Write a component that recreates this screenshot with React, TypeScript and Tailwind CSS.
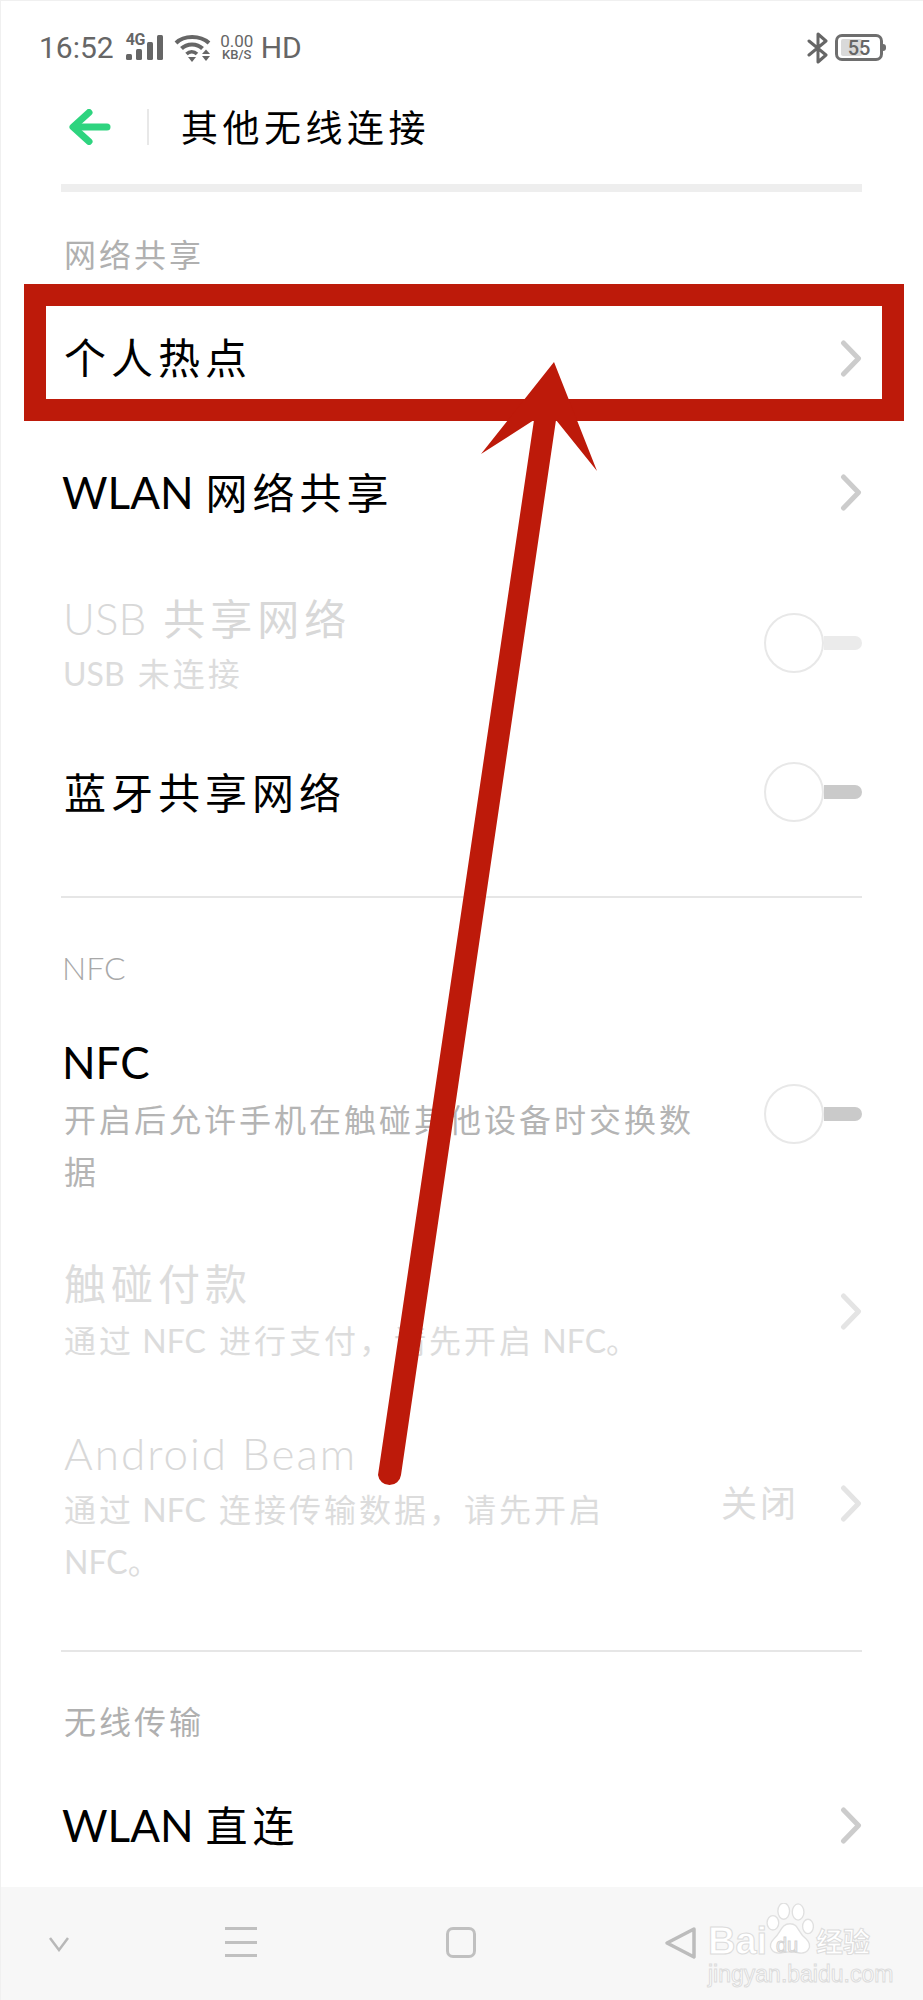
import React from "react";

const FONT = "font-['Lato','Noto_Sans_CJK_SC',sans-serif]";

function Chevron({ color = "#cccccc" }: { color?: string }) {
  return (
    <svg width="22" height="37" viewBox="0 0 22 37" fill="none" className="shrink-0">
      <polyline points="3.5,3 18.5,18.5 3.5,34" stroke={color} strokeWidth="5" strokeLinecap="round" strokeLinejoin="round" />
    </svg>
  );
}

function Toggle({ track }: { track: string }) {
  return (
    <div className="flex items-center shrink-0 mb-[3px]">
      <div className="w-[60px] h-[60px] rounded-full border-2 border-[#e8e8e8] bg-white" />
      <div className={`w-[38px] h-[14px] rounded-r-full ${track}`} />
    </div>
  );
}

function Divider() {
  return <div className="h-[2px] bg-[#e6e6e6]" />;
}

function Cjk({ children, className = "" }: { children: React.ReactNode; className?: string }) {
  return <span className={`font-normal tracking-[5px] ${className}`}>{children}</span>;
}

function Sub({ children, color = "text-[#b4b4b4]" }: { children: React.ReactNode; color?: string }) {
  return <div className={`text-[32px] leading-[52px] tracking-[3px] ${color}`}>{children}</div>;
}

function Lat({ children, gap = false }: { children: React.ReactNode; gap?: boolean }) {
  return <span className={gap ? "tracking-normal mr-[5px]" : "tracking-normal"}>{children}</span>;
}

export default function App() {
  return (
    <div className={`relative w-[923px] h-[2000px] bg-white overflow-hidden flex flex-col border-l border-t border-[#f0f0f0] ${FONT}`}>
      {/* status bar */}
      <div className="h-[91px] flex items-center justify-between pl-[38px] pr-[40px] pt-[2px] text-[#666666] font-['Roboto',sans-serif] shrink-0">
        <div className="flex items-center">
          <span className="text-[30px] leading-none">16:52</span>
          <div className="relative w-[38px] h-[26px] ml-[12px]">
            <span className="absolute left-0 top-[-3px] text-[16px] font-bold leading-[16px] tracking-[-0.5px]">4G</span>
            <svg width="38" height="26" viewBox="0 0 38 26" className="absolute left-0 top-0">
              <rect x="0" y="19" width="6" height="6" rx="1.5" fill="#666" />
              <rect x="10" y="14" width="6" height="11" rx="1.5" fill="#666" />
              <rect x="21" y="7" width="6" height="18" rx="1.5" fill="#666" />
              <rect x="31" y="0" width="6" height="25" rx="1.5" fill="#666" />
            </svg>
          </div>
          <svg width="37" height="28" viewBox="0 0 37 28" fill="none" className="ml-[10px]">
            <path d="M2 9 C10 1 26 1 35 9" stroke="#666" strokeWidth="4" />
            <path d="M7.5 14.5 C13 9 23 9 28.5 14.5" stroke="#666" strokeWidth="4" />
            <path d="M12.5 20 C15.5 17 20 17 23 20" stroke="#666" strokeWidth="3.5" />
            <path d="M14 23 L22 23 L18 28 Z" fill="#666" />
            <path d="M28 20 L32 15.5 L36 20 Z" fill="#666" />
            <path d="M28 22 L36 22 L32 27 Z" fill="#666" />
          </svg>
          <div className="flex flex-col items-center ml-[8px] w-[36px]">
            <span className="text-[17px] leading-[14px]">0.00</span>
            <span className="text-[13px] leading-[13px] font-medium">KB/S</span>
          </div>
          <span className="text-[30px] leading-none ml-[6px]">HD</span>
        </div>
        <div className="flex items-center">
          <svg width="22" height="34" viewBox="0 0 22 34" fill="none">
            <path d="M2 10 L19 24 L11 31 V3 L19 10 L2 24" stroke="#666" strokeWidth="3" strokeLinejoin="round" strokeLinecap="round" />
          </svg>
          <div className="relative ml-[6px] w-[48px] h-[27px] rounded-[7px] border-[3px] border-[#6e6e6e]">
            <div className="absolute left-[3px] top-[2px] w-[21px] h-[17px] rounded-[2px] bg-[#d9d9d9]" />
            <span className="absolute inset-0 flex items-center justify-center text-[20px] font-medium leading-none">55</span>
            <div className="absolute right-[-6px] top-[7px] w-[3px] h-[7px] rounded-r-full bg-[#6e6e6e]" />
          </div>
        </div>
      </div>

      {/* title bar */}
      <div className="h-[70px] flex items-center pl-[68px] shrink-0">
        <svg width="42" height="36" viewBox="0 0 42 36" fill="none">
          <path d="M20 3.5 L4 18 L20 32.5" stroke="#2ed47f" strokeWidth="7" strokeLinecap="round" strokeLinejoin="round" />
          <path d="M6 18 H38" stroke="#2ed47f" strokeWidth="7" strokeLinecap="round" />
        </svg>
        <div className="w-[2px] h-[36px] bg-[#e8e8e8] ml-[36px]" />
        <span className="ml-[32px] text-[37px] leading-none tracking-[4.5px] text-black">其他无线连接</span>
      </div>

      {/* settings list */}
      <div className="flex-1 pl-[60px] pr-[61px] flex flex-col">
        <div className="h-[8px] bg-[#eeeeee] mt-[22px]" />

        <div className="h-[99px] pt-[26px] flex items-center text-[32px] tracking-[3px] text-[#b0b0b0] pl-[3px]">网络共享</div>

        <div className="h-[134px] flex items-center justify-between">
          <div className="text-[42px] leading-[58px] text-black pl-[3px]"><Cjk className="tracking-[5.5px]">个人热点</Cjk></div>
          <Chevron />
        </div>
        <div className="h-[134px] flex items-center justify-between">
          <div className="text-[44px] leading-[58px] text-black pl-[1px]">
            WLAN<Cjk className="ml-[12px] text-[42px]">网络共享</Cjk>
          </div>
          <Chevron />
        </div>

        <div className="h-[170px] flex items-center justify-between">
          <div className="pl-[2px]">
            <div className="text-[44px] leading-[58px] font-light text-[#d8d8d8]">
              USB<Cjk className="ml-[17px] text-[42px]">共享网络</Cjk>
            </div>
            <Sub color="text-[#dcdcdc]"><Lat gap>USB </Lat>未连接</Sub>
          </div>
          <Toggle track="bg-[#ebebeb]" />
        </div>
        <div className="h-[128px] flex items-center justify-between">
          <div className="text-[42px] leading-[58px] text-black pl-[3px]"><Cjk>蓝牙共享网络</Cjk></div>
          <Toggle track="bg-[#cacaca]" />
        </div>

        <div className="mt-[39px]"><Divider /></div>

        <div className="h-[112px] pt-[28px] flex items-center text-[32px] font-light text-[#a8a8a8] pl-[1px]">NFC</div>

        <div className="h-[210px] flex items-center justify-between">
          <div className="w-[650px] pl-[3px]">
            <div className="text-[44px] leading-[58px] text-black -ml-[2px]">NFC</div>
            <div className="mt-[3px]"><Sub>开启后允许手机在触碰其他设备时交换数据</Sub></div>
          </div>
          <Toggle track="bg-[#cacaca]" />
        </div>
        <div className="h-[182px] flex items-center justify-between">
          <div className="pl-[3px]">
            <div className="text-[42px] leading-[58px] text-[#dcdcdc]"><Cjk>触碰付款</Cjk></div>
            <div className="mt-[2px]"><Sub color="text-[#dcdcdc]">通过<Lat gap> NFC </Lat>进行支付，请先开启<Lat> NFC</Lat>。</Sub></div>
          </div>
          <Chevron color="#e4e4e4" />
        </div>
        <div className="h-[208px] flex items-center justify-between">
          <div className="w-[560px] pl-[3px]">
            <div className="text-[44px] leading-[58px] font-light tracking-[2px] text-[#d8d8d8]">Android Beam</div>
            <div className="mt-[2px]"><Sub color="text-[#dcdcdc]">通过<Lat gap> NFC </Lat>连接传输数据，请先开启<Lat> NFC</Lat>。</Sub></div>
          </div>
          <div className="flex items-center gap-[41px] mb-[6px]">
            <span className="text-[36px] tracking-[3px] text-[#dcdcdc]">关闭</span>
            <Chevron color="#e4e4e4" />
          </div>
        </div>

        <div className="mt-[40px]"><Divider /></div>

        <div className="h-[118px] pt-[22px] flex items-center text-[32px] tracking-[3px] text-[#b0b0b0] pl-[3px]">无线传输</div>

        <div className="h-[110px] flex items-center justify-between">
          <div className="text-[44px] leading-[58px] text-black pl-[1px]">
            WLAN<Cjk className="ml-[12px] text-[42px]">直连</Cjk>
          </div>
          <Chevron />
        </div>
      </div>

      {/* navigation bar */}
      <div className="h-[113px] shrink-0 bg-[#f7f7f7] relative">
        <div className="absolute inset-0 flex items-start pt-[40px]">
          <svg width="22" height="16" viewBox="0 0 22 16" fill="none" className="ml-[47px] mt-[9px]">
            <polyline points="2,2 11,14 20,2" stroke="#b8b8b8" strokeWidth="2.5" />
          </svg>
          <div className="ml-[155px] w-[32px] h-[30px] flex flex-col justify-between">
            <div className="h-[3px] bg-[#c0c0c0]" />
            <div className="h-[3px] bg-[#c0c0c0]" />
            <div className="h-[3px] bg-[#c0c0c0]" />
          </div>
          <div className="ml-[189px] w-[30px] h-[31px] rounded-[7px] border-[3px] border-[#c0c0c0]" />
          <svg width="34" height="34" viewBox="0 0 34 34" fill="none" className="ml-[188px] -mt-[1px]">
            <path d="M30 3 L3 17 L30 31 Z" stroke="#bcbcbc" strokeWidth="3.5" strokeLinejoin="round" />
          </svg>
        </div>
      </div>

      {/* Baidu watermark */}
      <div className="absolute left-[707px] top-[1922px] w-[170px] h-[62px] text-white">
        <span className="absolute left-0 top-0 font-['Liberation_Sans',sans-serif] font-bold text-[38px] leading-[36px] [-webkit-text-stroke:1px_#dcdcdc]">Bai</span>
        <svg width="48" height="54" viewBox="0 0 52 60" className="absolute left-[58px] top-[-20px]" fill="#ffffff" stroke="#e0e0e0" strokeWidth="1.5">
          <ellipse cx="19" cy="9" rx="6.5" ry="9" />
          <ellipse cx="35" cy="10" rx="6.5" ry="9" />
          <ellipse cx="7" cy="22" rx="6.5" ry="8" />
          <ellipse cx="46" cy="26" rx="6" ry="8" />
          <path d="M26 23 C36 23 34 33 44 40 C52 48 46 58 34 55 C28 54 24 54 18 55 C6 58 0 48 8 40 C16 33 16 23 26 23 Z" />
        </svg>
        <span className="absolute left-[68px] top-[12px] font-['Liberation_Sans',sans-serif] text-[20px] leading-none text-[#f7f7f7] [-webkit-text-stroke:1px_#d4d4d4]">du</span>
        <span className="absolute left-[108px] top-[4px] font-['Noto_Sans_CJK_SC',sans-serif] text-[27px] leading-none font-bold [-webkit-text-stroke:1px_#dcdcdc] whitespace-nowrap">经验</span>
        <div className="absolute left-0 top-[38px] font-['Liberation_Sans',sans-serif] text-[23px] leading-[26px] whitespace-nowrap [-webkit-text-stroke:1px_#dcdcdc]">jingyan.baidu.com</div>
      </div>

      {/* red annotation */}
      <div className="absolute left-[23px] top-[283px] w-[880px] h-[137px] border-[22px] border-[#bd1a0a]" />
      <svg className="absolute left-[-1px] top-[-1px] pointer-events-none" width="923" height="2000" viewBox="0 0 923 2000">
        <path d="M554 362 L597 471 L556 420 L401 1475 A11.6 11.6 0 0 1 378 1475 L534 420 L481 454 Z" fill="#bd1a0a" />
      </svg>
    </div>
  );
}
